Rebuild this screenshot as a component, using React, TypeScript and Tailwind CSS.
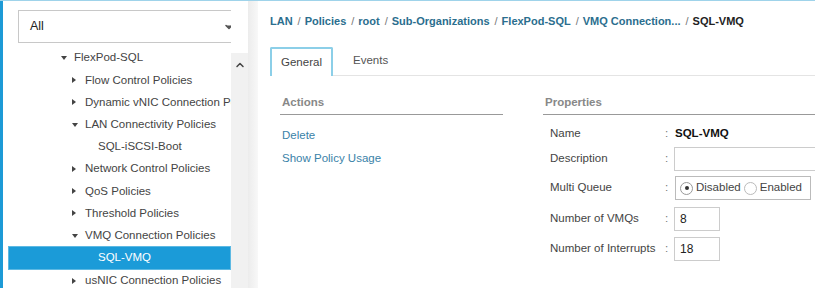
import { ChevronDown, ChevronUp } from 'lucide-react';

interface TreeRow {
  label: string;
  depth: number;
  caret?: 'open' | 'closed';
  selected?: boolean;
}

const rows: TreeRow[] = [
  { label: 'FlexPod-SQL', depth: 0, caret: 'open' },
  { label: 'Flow Control Policies', depth: 1, caret: 'closed' },
  { label: 'Dynamic vNIC Connection Policies', depth: 1, caret: 'closed' },
  { label: 'LAN Connectivity Policies', depth: 1, caret: 'open' },
  { label: 'SQL-iSCSI-Boot', depth: 2 },
  { label: 'Network Control Policies', depth: 1, caret: 'closed' },
  { label: 'QoS Policies', depth: 1, caret: 'closed' },
  { label: 'Threshold Policies', depth: 1, caret: 'closed' },
  { label: 'VMQ Connection Policies', depth: 1, caret: 'open' },
  { label: 'SQL-VMQ', depth: 2, selected: true },
  { label: 'usNIC Connection Policies', depth: 1, caret: 'closed' },
];

const crumbs = ['LAN', 'Policies', 'root', 'Sub-Organizations', 'FlexPod-SQL', 'VMQ Connection...'];

export default function App() {
  return (
    <div className="w-[815px] h-[288px] overflow-hidden flex bg-white border-t border-[#9fd3ea] text-[11.5px] text-[#333] [font-family:'Liberation_Sans',Arial,sans-serif]">
      {/* Left nav */}
      <div className="w-[248px] shrink-0 flex border-l-[3px] border-[#1d9ad6]">
        <div className="flex-1 min-w-0 overflow-hidden flex flex-col">
          <div className="shrink-0 mt-[9px] ml-[15px] h-[33px] w-[225px] border border-[#c8c8c8] flex items-center justify-between pl-[11px] pr-[7px] text-[12.5px] text-[#222]">
            All
            <ChevronDown className="w-3 h-3 fill-[#555] text-[#555]" strokeWidth={3} />
          </div>
          <div className="shrink-0 flex flex-col mt-[4px]">
            {rows.map((r, i) => (
              <div
                key={i}
                className={`shrink-0 flex items-center ${
                  r.selected
                    ? 'h-[24px] -mt-[1px] bg-[#1b9bd8] text-white ml-[5px] border border-[#5db9e3]'
                    : 'h-[22.2px] text-[#444]'
                }`}
              >
                <span
                  className={`flex items-center ${
                    r.depth === 0 ? 'pl-[58px]' : r.depth === 1 ? 'pl-[69px]' : r.selected ? 'pl-[89px]' : 'pl-[95px]'
                  }`}
                >
                  {r.caret === 'open' && (
                    <span className="w-0 h-0 border-l-[3px] border-r-[3px] border-t-[4px] border-l-transparent border-r-transparent border-t-[#444] mr-[7px]" />
                  )}
                  {r.caret === 'closed' && (
                    <span className="w-0 h-0 border-t-[3px] border-b-[3px] border-l-[4px] border-t-transparent border-b-transparent border-l-[#444] mr-[9px]" />
                  )}
                  <span className="whitespace-nowrap">{r.label}</span>
                </span>
              </div>
            ))}
          </div>
        </div>
        <div className="w-[17px] shrink-0 mt-[52px] bg-[#f1f1f1] flex justify-center pt-[6px]">
          <ChevronUp className="w-3 h-3 text-[#444]" strokeWidth={3} />
        </div>
      </div>
      {/* Divider */}
      <div className="w-[10px] shrink-0 bg-gradient-to-r from-[#ececec] to-[#f8f8f8]" />
      {/* Right pane */}
      <div className="flex-1 min-w-0 flex flex-col pl-[12px]">
        <div className="mt-[12px] h-[16px] flex items-center gap-[4px] font-bold text-[11px] whitespace-nowrap">
          {crumbs.map((c) => (
            <span key={c} className="flex items-center gap-[5px]">
              <span className="text-[#2b6e8e]">{c}</span>
              <span className="text-[#777] font-normal">/</span>
            </span>
          ))}
          <span className="text-[#222]">SQL-VMQ</span>
        </div>
        <div className="mt-[17px] flex items-end border-b border-[#e4e4e4]">
          <div className="h-[29px] w-[63px] border-t-2 border-l-2 border-r-2 border-[#8ccfe8] rounded-t-[2px] flex items-center justify-center text-[#444] -mb-px bg-white">
            General
          </div>
          <div className="h-[29px] flex items-center pl-[20px] text-[#555]">Events</div>
        </div>
        <div className="flex mt-[18px]">
          <div className="w-[234px] shrink-0 pl-[10px] flex flex-col">
            <div className="font-bold text-[#888] h-[18px] pl-[2px]">Actions</div>
            <div className="border-t border-[#999] mt-[2px] w-[223px]" />
            <div className="mt-[12px] pl-[2px] text-[#3a82a8]">Delete</div>
            <div className="mt-[6px] pl-[2px] text-[#3a82a8]">Show Policy Usage</div>
          </div>
          <div className="flex-1 pl-[39px] flex flex-col">
            <div className="font-bold text-[#888] h-[18px] pl-[2px]">Properties</div>
            <div className="border-t border-[#999] mt-[2px]" />
            <div className="flex flex-col mt-[9px] pl-[7px] text-[#444]">
              <div className="flex items-center h-[19px]">
                <span className="w-[115px]">Name</span>
                <span className="w-[10px] text-[#777]">:</span>
                <span className="font-bold text-[#111]">SQL-VMQ</span>
              </div>
              <div className="flex items-center h-[24px] mt-[4px]">
                <span className="w-[115px]">Description</span>
                <span className="w-[9px] text-[#777]">:</span>
                <div className="h-[24px] w-[170px] shrink-0 border border-[#ccc]" />
              </div>
              <div className="flex items-center h-[24px] mt-[5px]">
                <span className="w-[115px]">Multi Queue</span>
                <span className="w-[10px] text-[#777]">:</span>
                <div className="h-[24px] border border-[#bbb] flex items-center pl-[4px] pr-[8px] gap-[3px]">
                  <span className="w-[13px] h-[13px] rounded-full border border-[#999] flex items-center justify-center">
                    <span className="w-[4px] h-[4px] rounded-full bg-[#333]" />
                  </span>
                  <span>Disabled</span>
                  <span className="w-[13px] h-[13px] rounded-full border border-[#bbb]" />
                  <span>Enabled</span>
                </div>
              </div>
              <div className="flex items-center h-[24px] mt-[7px]">
                <span className="w-[115px]">Number of VMQs</span>
                <span className="w-[9px] text-[#777]">:</span>
                <div className="h-[24px] w-[46px] border border-[#ccc] flex items-center pl-[5px] text-[#222] text-[12px]">8</div>
              </div>
              <div className="flex items-center h-[24px] mt-[6px]">
                <span className="w-[115px]">Number of Interrupts</span>
                <span className="w-[9px] text-[#777]">:</span>
                <div className="h-[24px] w-[46px] border border-[#ccc] flex items-center pl-[5px] text-[#222] text-[12px]">18</div>
              </div>
            </div>
          </div>
        </div>
      </div>
    </div>
  );
}
